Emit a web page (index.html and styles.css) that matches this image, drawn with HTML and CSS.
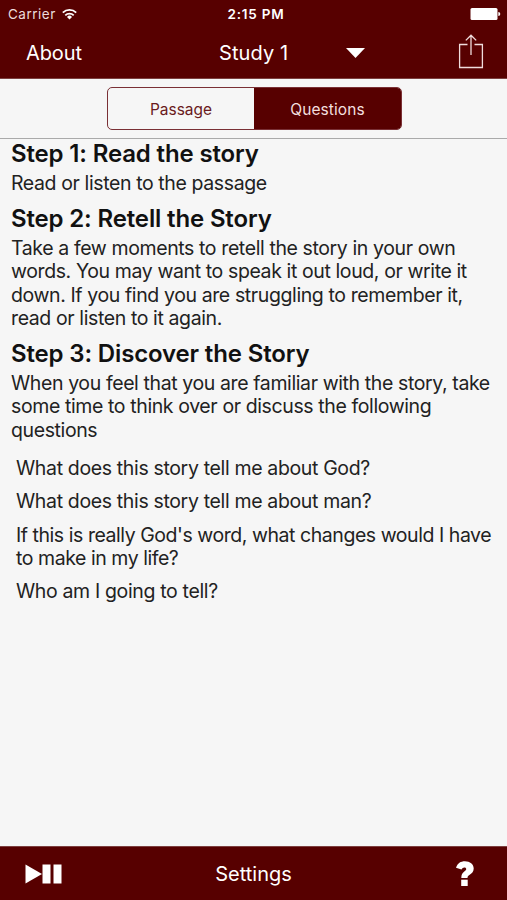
FILE: index.html
```html
<!DOCTYPE html>
<html lang="en">
<head>
    <meta charset="UTF-8">
    <meta name="viewport" content="width=device-width, initial-scale=1.0">
    <title>Study 1</title>
    <link rel="stylesheet" href="styles.css">
</head>
<body>
    <!-- Status bar and navigation -->
    <header>
        <div class="status-bar">
            <div class="carrier">
                <span>Carrier</span>
                <svg class="wifi" width="15" height="12" viewBox="0 0 15 12" fill="none" stroke="#fff" stroke-width="1.8">
                    <path d="M0.8 4.6a9.6 9.6 0 0 1 13.4 0"/>
                    <path d="M3.3 7.3a6 6 0 0 1 8.4 0"/>
                    <path d="M7.5 11.4L5 8.9a3.5 3.5 0 0 1 5 0z" fill="#fff" stroke="none"/>
                </svg>
            </div>
            <span class="time">2:15 PM</span>
            <svg class="battery" width="31" height="12" viewBox="0 0 31 12" fill="#fff">
                <rect x="0.5" y="0" width="27" height="12" rx="1.5"/>
                <path d="M28.3 4a2 2 0 0 1 0 4z"/>
            </svg>
        </div>
        <nav>
            <a class="about">About</a>
            <div class="study">
                <span>Study 1</span>
                <svg width="19" height="10" viewBox="0 0 20 10" preserveAspectRatio="none"><path d="M0 0h20L10 10z" fill="#fff"/></svg>
            </div>
            <svg class="share" width="26" height="35" viewBox="0 0 26 35" fill="none" stroke="#f0dcdc" stroke-width="1.3">
                <path d="M9.5 10.5H1.6V33.5H24.4V10.5H16.5"/>
                <path d="M13 21V1.2M7.8 6.4L13 1.2l5.2 5.2"/>
            </svg>
        </nav>
    </header>

    <!-- Passage / Questions switch -->
    <div class="tabs">
        <div class="segments">
            <div class="segment">Passage</div>
            <div class="segment active">Questions</div>
        </div>
    </div>

    <main>
        <h2>Step 1: Read the story</h2>
        <p>Read or listen to the passage</p>
        <h2>Step 2: Retell the Story</h2>
        <p>Take a few moments to retell the story in your own<br>words. You may want to speak it out loud, or write it<br>down. If you find you are struggling to remember it,<br>read or listen to it again.</p>
        <h2>Step 3: Discover the Story</h2>
        <p>When you feel that you are familiar with the story, take<br>some time to think over or discuss the following<br>questions</p>
        <ul>
            <li>What does this story tell me about God?</li>
            <li>What does this story tell me about man?</li>
            <li class="long">If this is really God's word, what changes would I have<br>to make in my life?</li>
            <li>Who am I going to tell?</li>
        </ul>
    </main>

    <!-- Toolbar -->
    <footer>
        <svg class="play" width="38" height="20" viewBox="0 0 38 20" fill="#fff">
            <path d="M0.5 0.5L17 10L0.5 19.5z"/>
            <rect x="17.5" y="0.5" width="8" height="19"/>
            <rect x="28.5" y="0.5" width="8" height="19"/>
        </svg>
        <span class="settings">Settings</span>
        <svg class="help" width="20" height="26" viewBox="0 0 20 26" fill="#fff">
            <path d="M1 6.7C2.6 2.2 5.6 0.2 9.9 0.2c5.1 0 8.8 2.9 8.8 7.4 0 3-1.6 4.8-4 6.200-1.700 1-2.200 1.700-2.200 3.300H6.300c0-3.500 1-5.200 3-6.600 1.300-.9 1.900-1.500 1.900-2.500 0-1-.7-1.600-1.800-1.600-1.300 0-2.200.7-2.900 2.200z"/>
            <rect x="6.2" y="18.7" width="6.5" height="6.3"/>
        </svg>
    </footer>
</body>
</html>
```

FILE: styles.css
```css
/* General styling */
* {
    box-sizing: border-box;
}

body {
    font-family: 'Inter', 'Liberation Sans', sans-serif;
    background-color: #f6f6f6;
    color: #222;
    margin: 0;
    height: 100vh;
    display: flex;
    flex-direction: column;
    overflow: hidden;
    white-space: nowrap;
}

svg {
    display: block;
    flex: none;
}

/* Header */
header {
    background-color: #570000;
    color: #fff;
    height: 79px;
    border-bottom: 1px solid #7d4040;
}

.status-bar {
    height: 27px;
    padding: 0 6px 0 8px;
    display: grid;
    grid-template-columns: 1fr auto 1fr;
    align-items: center;
    font-size: 13.5px;
}

.carrier {
    display: flex;
    align-items: center;
    gap: 6px;
    color: #ecdcdc;
    letter-spacing: 0.5px;
}

.time {
    font-weight: 600;
    letter-spacing: 0.8px;
    padding-left: 3px;
}

.battery {
    justify-self: end;
}

nav {
    height: 51px;
    padding: 0 23px 0 26px;
    display: grid;
    grid-template-columns: 193px 1fr 26px;
    align-items: center;
    font-size: 20px;
    letter-spacing: -0.1px;
}

.study {
    display: flex;
    align-items: center;
    gap: 58px;
    letter-spacing: 0.1px;
}

.share {
    margin-top: -2px;
}

/* Tabs */
.tabs {
    height: 60px;
    padding-top: 8px;
    display: flex;
    justify-content: center;
    align-items: flex-start;
    border-bottom: 1px solid #aaa;
}

.segments {
    width: 295px;
    height: 43px;
    margin-left: 2px;
    display: grid;
    grid-template-columns: 146px 1fr;
    border: 1px solid #7a3035;
    border-radius: 5px;
    overflow: hidden;
}

.segment {
    display: flex;
    align-items: center;
    justify-content: center;
    padding-top: 2px;
    font-size: 15.5px;
    color: #6a1a20;
}

.segment.active {
    background-color: #570000;
    color: #f3dfdf;
    letter-spacing: 0.1px;
}

/* Content */
main {
    flex: 1;
    padding: 1.4px 11px 0;
}

h2 {
    margin: 0 0 3.5px;
    font-size: 24px;
    line-height: 28px;
    font-weight: 600;
    letter-spacing: -0.15px;
    color: #111;
}

p,
li {
    font-size: 19.5px;
    line-height: 23.33px;
    letter-spacing: -0.39px;
}

p {
    margin: 0 0 10.2px;
}

ul {
    list-style: none;
    margin: 15.2px 0 0;
    padding: 0 0 0 5px;
}

li {
    margin-bottom: 10px;
    letter-spacing: -0.35px;
}

li.long {
    letter-spacing: -0.45px;
}

/* Toolbar */
footer {
    height: 54px;
    padding: 0 32px;
    display: grid;
    grid-template-columns: 1fr auto 1fr;
    align-items: center;
    background-color: #570000;
    border-top: 1px solid #7d4040;
    color: #fff;
    font-size: 20px;
}

.play {
    margin-left: -7px;
}

.help {
    justify-self: end;
}
```
